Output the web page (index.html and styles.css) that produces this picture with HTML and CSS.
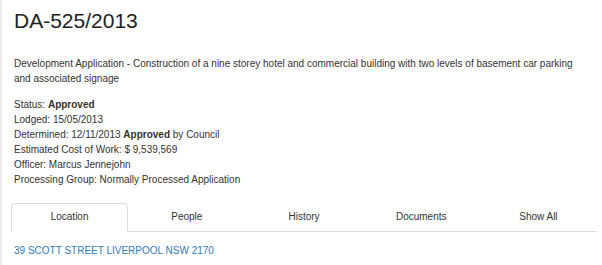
FILE: index.html
```html
<!doctype html>

<html>

<head>
    <meta charset='utf-8'>
    <title>DA-525/2013</title>
    <link rel="stylesheet" href="styles.css">
</head>

<body>
    <div class="page">
        <h1>DA-525/2013</h1>

        <p class="desc">Development Application - Construction of a nine storey hotel and commercial building with two levels of basement car parking and associated signage</p>

        <ul class="facts">
            <li>Status: <b>Approved</b></li>
            <li>Lodged: 15/05/2013</li>
            <li>Determined: 12/11/2013 <b>Approved</b> by Council</li>
            <li>Estimated Cost of Work: $ 9,539,569</li>
            <li>Officer: Marcus Jennejohn</li>
            <li>Processing Group: Normally Processed Application</li>
        </ul>

        <ul class="tabs">
            <li class="active"><a href="#">Location</a></li>
            <li><a href="#">People</a></li>
            <li><a href="#">History</a></li>
            <li><a href="#">Documents</a></li>
            <li><a href="#">Show All</a></li>
        </ul>

        <div class="tab-content">
            <a href="#">39 SCOTT STREET LIVERPOOL NSW 2170</a>
        </div>
    </div>
</body>

</html>
```

FILE: styles.css
```css
body {
    margin: 0;
    font-family: "Liberation Sans", Arial, sans-serif;
    font-size: 10px;
    line-height: 15px;
    color: #333;
    background: #fff;
}

.page {
    border-left: 2px solid #eee;
    padding: 0 5px 0 12px;
    height: 265px;
    box-sizing: border-box;
}

h1 {
    margin: 0;
    padding-top: 9px;
    font-size: 21px;
    font-weight: normal;
    line-height: 24px;
    color: #222;
}

.desc {
    max-width: 575px;
    margin: 23px 0 0;
}

.facts {
    list-style: none;
    margin: 11px 0 0;
    padding: 0;
}

.tabs {
    list-style: none;
    display: flex;
    margin: 16px 0 0 -3px;
    padding: 0;
    border-bottom: 1px solid #ddd;
}

.tabs li {
    flex: 1;
    text-align: center;
    margin-bottom: -1px;
}

.tabs a {
    display: block;
    padding: 5px 0 7px;
    color: #333;
    text-decoration: none;
    border: 1px solid transparent;
    border-radius: 4px 4px 0 0;
}

.tabs .active a {
    border-color: #ddd #ddd transparent;
    background: #fff;
}

.tab-content {
    padding-top: 11px;
}

.tab-content a {
    color: #337ab7;
    text-decoration: none;
}
```
